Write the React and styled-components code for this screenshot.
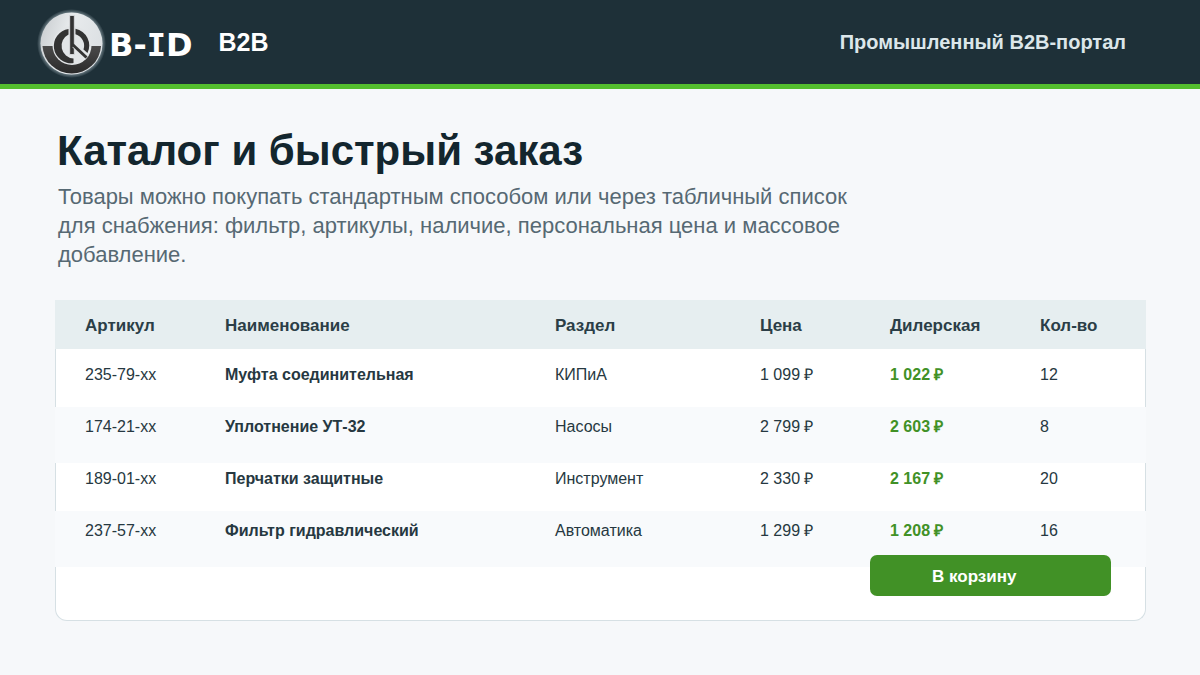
import React from 'react';
import styled, { createGlobalStyle } from 'styled-components';

const GlobalStyle = createGlobalStyle`
  * {
    box-sizing: border-box;
  }
  body {
    margin: 0;
    background: #f6f8fa;
    font-family: "Liberation Sans", Arial, sans-serif;
    color: #263841;
  }
`;

const Header = styled.header`
  display: flex;
  align-items: center;
  height: 89px;
  padding: 0 74px 0 36px;
  background: #1e3038;
  border-bottom: 5px solid #54be2e;
`;

const Brand = styled.a`
  display: flex;
  align-items: center;
  gap: 1px;
  padding-top: 4px;
  color: #fff;
  text-decoration: none;
`;

const BrandName = styled.span`
  padding-top: 2px;
  font: bold 32px/36px "DejaVu Sans", sans-serif;
`;

const SlabLetter = styled.span`
  font-family: "DejaVu Sans Mono", monospace;
`;

const Section = styled.span`
  margin-left: 26px;
  font-size: 25px;
  line-height: 30px;
  font-weight: bold;
  color: #fff;
`;

const Portal = styled.span`
  margin-left: auto;
  font-size: 20px;
  line-height: 24px;
  font-weight: bold;
  color: #dce6ea;
`;

const Main = styled.main`
  padding: 36px 54px 54px 55px;
`;

const Title = styled.h1`
  margin: 0 2px;
  font-size: 42px;
  line-height: 52px;
  color: #13262e;
`;

const Lead = styled.p`
  max-width: 800px;
  margin: 5px 3px 31px;
  font-size: 22px;
  line-height: 29px;
  color: #566973;
`;

const Table = styled.table`
  width: 100%;
  table-layout: fixed;
  border-collapse: collapse;
  text-align: left;
  font-size: 16px;
  line-height: 20px;
`;

const HeadCell = styled.th`
  width: ${(props) => props.$width};
  height: 49px;
  padding: 2px 0 0;
  font-size: 17px;
  color: #2b3e47;
  background: #e6eef0;

  &:first-child {
    padding-left: 30px;
  }
`;

const Row = styled.tr`
  height: 48px;
  background: #fff;
  box-shadow: inset 1px 0 #d6e0e4, inset -1px 0 #d6e0e4;

  &:nth-child(even) {
    height: 56px;
    background: #f8fafc;
    box-shadow: none;
  }
  &:first-child {
    height: 58px;
  }
`;

const Cell = styled.td`
  padding: 6px 0 0;
  vertical-align: top;
  font-weight: ${(props) => (props.$bold ? 'bold' : 'normal')};
  color: ${(props) => (props.$accent ? '#419126' : 'inherit')};

  ${Row}:nth-child(even) & {
    padding-top: 10px;
  }
  ${Row}:first-child & {
    padding-top: 16px;
  }
  &:first-child {
    padding-left: 30px;
  }
`;

const Actions = styled.div`
  display: flex;
  justify-content: flex-end;
  height: 54px;
  padding-right: 34px;
  background: #fff;
  border: 1px solid #d6e0e4;
  border-top: 0;
  border-radius: 0 0 12px 12px;
`;

const CartButton = styled.button`
  width: 241px;
  height: 41px;
  margin-top: -12px;
  padding: 2px 62px 0;
  border: 0;
  border-radius: 7px;
  background: #419126;
  color: #fff;
  font: bold 17px/20px "Liberation Sans", Arial, sans-serif;
  text-align: left;
  cursor: pointer;
`;

const columns = [
  { label: 'Артикул', width: '170px' },
  { label: 'Наименование', width: '330px' },
  { label: 'Раздел', width: '205px' },
  { label: 'Цена', width: '130px' },
  { label: 'Дилерская', width: '150px' },
  { label: 'Кол-во', width: 'auto' },
];

const products = [
  { sku: '235-79-xx', name: 'Муфта соединительная', section: 'КИПиА', price: '1 099 ₽', dealer: '1 022 ₽', qty: 12 },
  { sku: '174-21-xx', name: 'Уплотнение УТ-32', section: 'Насосы', price: '2 799 ₽', dealer: '2 603 ₽', qty: 8 },
  { sku: '189-01-xx', name: 'Перчатки защитные', section: 'Инструмент', price: '2 330 ₽', dealer: '2 167 ₽', qty: 20 },
  { sku: '237-57-xx', name: 'Фильтр гидравлический', section: 'Автоматика', price: '1 299 ₽', dealer: '1 208 ₽', qty: 16 },
];

function Logo() {
  return (
    <svg width="72" height="72" viewBox="0 0 72 72" aria-hidden="true">
      <defs>
        <radialGradient id="glow">
          <stop offset="0.86" stopColor="#a9b9c0" stopOpacity="0.7" />
          <stop offset="1" stopColor="#a9b9c0" stopOpacity="0" />
        </radialGradient>
        <linearGradient id="plate" x1="0" y1="0" x2="1" y2="0.3">
          <stop offset="0" stopColor="#c6cacd" />
          <stop offset="0.5" stopColor="#e8ebed" />
          <stop offset="1" stopColor="#dde1e4" />
        </linearGradient>
        <linearGradient id="bowl" x1="0" y1="0" x2="0" y2="1">
          <stop offset="0" stopColor="#4a4a4a" />
          <stop offset="1" stopColor="#2a2a2a" />
        </linearGradient>
      </defs>
      <circle cx="35.500" cy="35.500" r="34.500" fill="url(#glow)" />
      <circle cx="35.500" cy="35.500" r="31" fill="url(#plate)" />
      <path d="M6.500 38H65A29.300 29.300 0 0 1 6.500 38Z" fill="url(#bowl)" />
      <circle cx="36" cy="37.500" r="19.500" fill="#e2e5e7" />
      <path d="M32.500 21A17 17 0 0 0 37.500 55V50.500A12.700 12.700 0 0 1 32.500 26.500Z" fill="#333" />
      <path d="M39.500 20.800A17 17 0 0 1 51.500 45L47.500 41.500A12 12 0 0 0 39.500 26.200Z" fill="#333" />
      <path d="M33.700 7.500H38.300V46.500H33.700Z" fill="#333" stroke="#e2e5e7" strokeWidth="0.800" />
      <path d="M38 37.500L51 49.500" fill="none" stroke="#e2e5e7" strokeWidth="5" />
      <path d="M36.500 36.500L50.500 49.500" fill="none" stroke="#333" strokeWidth="3" />
    </svg>
  );
}

export default function App() {
  return (
    <>
      <GlobalStyle />
      <Header>
        <Brand href="/">
          <Logo />
          <BrandName>B-<SlabLetter>I</SlabLetter>D</BrandName>
        </Brand>
        <Section>B2B</Section>
        <Portal>Промышленный B2B-портал</Portal>
      </Header>
      <Main>
        <Title>Каталог и быстрый заказ</Title>
        <Lead>
          Товары можно покупать стандартным способом или через табличный список
          для снабжения: фильтр, артикулы, наличие, персональная цена и массовое
          добавление.
        </Lead>
        <Table>
          <thead>
            <tr>
              {columns.map((col) => (
                <HeadCell key={col.label} scope="col" $width={col.width}>{col.label}</HeadCell>
              ))}
            </tr>
          </thead>
          <tbody>
            {products.map((item) => (
              <Row key={item.sku}>
                <Cell>{item.sku}</Cell>
                <Cell $bold>{item.name}</Cell>
                <Cell>{item.section}</Cell>
                <Cell>{item.price}</Cell>
                <Cell $bold $accent>{item.dealer}</Cell>
                <Cell>{item.qty}</Cell>
              </Row>
            ))}
          </tbody>
        </Table>
        <Actions>
          <CartButton type="button">В корзину</CartButton>
        </Actions>
      </Main>
    </>
  );
}
